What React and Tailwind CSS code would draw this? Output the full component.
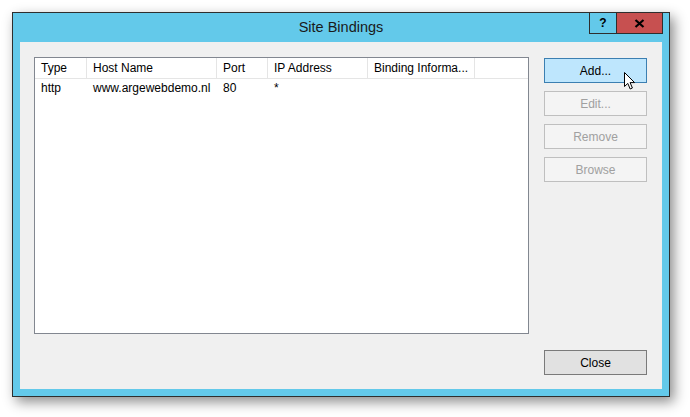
import React from 'react';

const font = { fontFamily: '"Liberation Sans", Arial, sans-serif' };

const cols = [
  { name: 'Type', w: 'w-[52px]' },
  { name: 'Host Name', w: 'w-[130px]' },
  { name: 'Port', w: 'w-[51px]' },
  { name: 'IP Address', w: 'w-[100px]' },
  { name: 'Binding Informa...', w: 'w-[107px]' },
];

const rows = [['http', 'www.argewebdemo.nl', '80', '*', '']];

const SideButton = ({ label, active, disabled }) => {
  let cls = 'border-[#7a7a7a] bg-[#e1e1e1] text-black';
  if (active) cls = 'border-[#3c7fb1] bg-[#bee6fd] text-black';
  if (disabled) cls = 'border-[#bfbfbf] bg-[#f4f4f4] text-[#a0a0a0]';
  return (
    <div className={`h-[25px] w-[103px] border flex items-center justify-center text-[12px] ${cls}`}>
      {label}
    </div>
  );
};

// Pointer over the Add button
const Cursor = () => (
  <svg className="absolute left-[623px] top-[71px]" width="14" height="20" viewBox="0 0 14 20">
    <path d="M1.5 1.5 L1.5 15.5 L4.8 12.4 L7.2 18 L9.4 17 L7.1 11.6 L11.6 11.6 Z" fill="#fff" stroke="#000" strokeWidth="1" strokeLinejoin="miter" />
  </svg>
);

export default function App() {
  return (
    <div className="relative w-[690px] h-[417px] bg-white overflow-hidden" style={font}>
      <div className="ml-[12px] mt-[12px] w-[658px] h-[385px] border border-[#2e2e2e] bg-[#63c9ea] flex flex-col shadow-[4px_5px_12px_rgba(0,0,0,0.45)]">
        {/* Title bar */}
        <div className="relative h-[29px] flex items-center justify-center">
          <span className="text-[14.5px] text-[#1a1a1a] pt-[1px]">Site Bindings</span>
          <div className="absolute right-[6px] top-0 flex h-[21px] border-l border-b border-r border-[#2e2e2e]">
            <div className="w-[27px] flex items-center justify-center border-r border-[#2e2e2e] text-[12px] font-bold text-black">?</div>
            <div className="w-[45px] bg-[#c75050] flex items-center justify-center">
              <svg width="11" height="9" viewBox="0 0 11 9">
                <path d="M1.5 1 L9.5 8 M9.5 1 L1.5 8" stroke="#000" strokeWidth="2.2" />
              </svg>
            </div>
          </div>
        </div>

        {/* Client area */}
        <div className="mx-[7px] mb-[7px] flex-1 bg-[#f0f0f0] flex pt-[15px] pl-[14px] pr-[15px] pb-[14px]">
          <div className="w-[495px] h-[277px] border border-[#828790] bg-white text-[12px] text-black">
            <div className="flex h-[21px] border-b border-[#e5e5e5]">
              {cols.map((c) => (
                <div key={c.name} className={`${c.w} h-full border-r border-[#e5e5e5] pl-[6px] flex items-center whitespace-nowrap overflow-hidden`}>
                  {c.name}
                </div>
              ))}
            </div>
            {rows.map((r, i) => (
              <div key={i} className="flex h-[18px]">
                {r.map((v, j) => (
                  <div key={j} className={`${cols[j].w} pl-[6px] flex items-center whitespace-nowrap`}>
                    {v}
                  </div>
                ))}
              </div>
            ))}
          </div>

          <div className="ml-[15px] w-[103px] flex flex-col justify-between pt-[1px]">
            <div className="flex flex-col gap-[8px]">
              <SideButton label="Add..." active />
              <SideButton label="Edit..." disabled />
              <SideButton label="Remove" disabled />
              <SideButton label="Browse" disabled />
            </div>
            <SideButton label="Close" />
          </div>
        </div>
      </div>
      <Cursor />
    </div>
  );
}
